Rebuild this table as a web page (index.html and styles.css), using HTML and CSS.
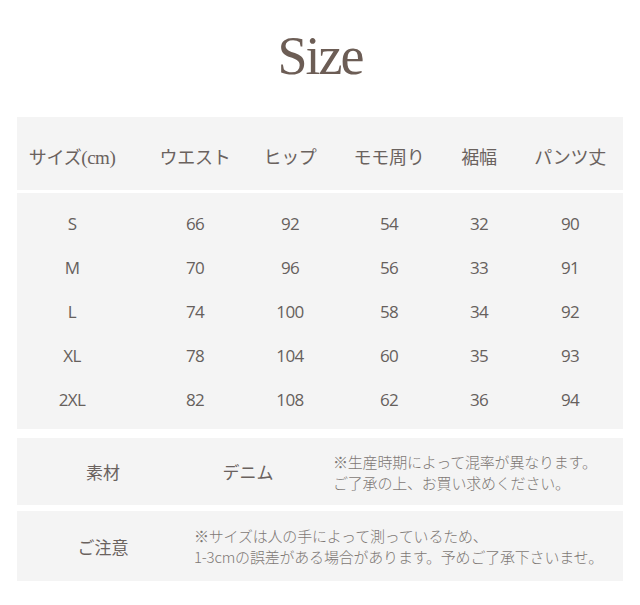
FILE: index.html
```html
<!DOCTYPE html>
<html lang="ja">
<head>
<meta charset="utf-8">
<link rel="stylesheet" href="styles.css">
</head>
<body>
<div class="page">
  <h1 class="title">Size</h1>

  <div class="panel head-panel">
    <div class="grid">
      <div class="cell">サイズ<span class="serif">(cm)</span></div>
      <div class="cell">ウエスト</div>
      <div class="cell">ヒップ</div>
      <div class="cell">モモ周り</div>
      <div class="cell">裾幅</div>
      <div class="cell">パンツ丈</div>
    </div>
  </div>

  <div class="panel data-panel">
    <div class="grid row"><div class="cell">S</div><div class="cell">66</div><div class="cell">92</div><div class="cell">54</div><div class="cell">32</div><div class="cell">90</div></div>
    <div class="grid row"><div class="cell">M</div><div class="cell">70</div><div class="cell">96</div><div class="cell">56</div><div class="cell">33</div><div class="cell">91</div></div>
    <div class="grid row"><div class="cell">L</div><div class="cell">74</div><div class="cell">100</div><div class="cell">58</div><div class="cell">34</div><div class="cell">92</div></div>
    <div class="grid row"><div class="cell">XL</div><div class="cell">78</div><div class="cell">104</div><div class="cell">60</div><div class="cell">35</div><div class="cell">93</div></div>
    <div class="grid row"><div class="cell">2XL</div><div class="cell">82</div><div class="cell">108</div><div class="cell">62</div><div class="cell">36</div><div class="cell">94</div></div>
  </div>

  <div class="panel material-panel">
    <div class="label">素材</div>
    <div class="value">デニム</div>
    <div class="note">※生産時期によって混率が異なります。<br>ご了承の上、お買い求めください。</div>
  </div>

  <div class="panel notice-panel">
    <div class="label">ご注意</div>
    <div class="note">※サイズは人の手によって測っているため、<br>1-3cmの誤差がある場合があります。予めご了承下さいませ。</div>
  </div>
</div>
</body>
</html>
```

FILE: styles.css
```css
html, body {
  margin: 0;
  padding: 0;
  background: #ffffff;
}

.page {
  width: 606px;
  margin: 0 auto 0 17px;
  font-family: "Noto Sans CJK JP", "Open Sans", sans-serif;
  color: #5e5753;
}

.title {
  margin: 0;
  height: 117px;
  padding-top: 24px;
  box-sizing: border-box;
  text-align: center;
  font-family: "Liberation Serif", "DejaVu Serif", serif;
  font-weight: 400;
  font-size: 54px;
  line-height: 64px;
  letter-spacing: -2px;
  color: #6c5d55;
}

.panel {
  background: #f4f4f4;
}

.grid {
  display: grid;
  grid-template-columns: 110px 136px 54px 144px 36px 126px;
}

.cell {
  text-align: center;
  white-space: nowrap;
}

.cell:last-child {
  padding-left: 20px;
}

.head-panel {
  height: 73px;
  display: flex;
  align-items: center;
  padding-top: 4px;
  box-sizing: border-box;
}

.head-panel .grid {
  width: 100%;
  font-size: 18px;
  color: #6a625e;
  letter-spacing: -0.3px;
}

.serif {
  font-family: "Liberation Serif", serif;
  font-size: 19px;
  letter-spacing: -0.5px;
}

.data-panel {
  margin-top: 3px;
  padding: 8px 0;
}

.row {
  height: 44px;
  align-items: center;
  font-family: "Open Sans", "Noto Sans", sans-serif;
  font-size: 17px;
  letter-spacing: -0.6px;
  color: #66605c;
}

.material-panel,
.notice-panel {
  display: flex;
  align-items: center;
}

.material-panel {
  margin-top: 9px;
  height: 67px;
}

.notice-panel {
  margin-top: 6px;
  height: 70px;
}

.label {
  font-size: 17px;
  color: #6a625e;
  text-align: center;
}

.material-panel .label {
  width: 172px;
}

.material-panel .value {
  width: 118px;
  font-size: 17px;
  color: #6a625e;
  text-align: center;
}

.material-panel .note {
  margin-left: 26px;
}

.notice-panel .label {
  width: 172px;
}

.notice-panel .note {
  margin-left: 5px;
}

.note {
  font-size: 15px;
  line-height: 21px;
  font-weight: 300;
  color: #7e7874;
  letter-spacing: -0.2px;
}
```
